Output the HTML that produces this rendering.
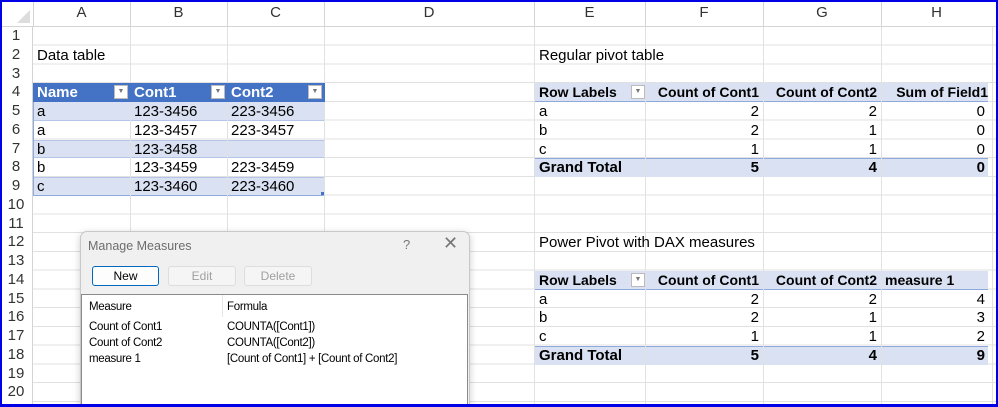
<!DOCTYPE html><html><head><style>
*{margin:0;padding:0;box-sizing:border-box}
body{width:998px;height:407px;overflow:hidden;background:#fff;font-family:"Liberation Sans",Arial,sans-serif;position:relative}
.g{position:absolute;left:0;top:27px;width:998px;height:380px;background:repeating-linear-gradient(to bottom,transparent 0,transparent 17.75px,#e1e1e1 17.75px,#e1e1e1 18.75px)}
.v{position:absolute;top:0;height:407px;width:1px;background:#e1e1e1}
.hdr{position:absolute;left:0;top:0;width:998px;height:27px;background:#fff;border-bottom:1px solid #d4d4d4}
.rh{position:absolute;left:0;top:27px;width:33px;height:380px;background:#fff;border-right:1px solid #d4d4d4}
.ch{position:absolute;top:4px;font-size:15px;color:#333;text-align:center}
.rn{position:absolute;left:0;width:32px;text-align:center;font-size:15px;color:#333;height:18.75px;line-height:18.75px}
.c{position:absolute;height:18.75px;line-height:19px;font-size:15px;color:#000;white-space:nowrap;padding-left:4px}
.r{text-align:right;padding-right:4px;padding-left:0}
.b{font-weight:bold}
.p{font-size:14px}
.band{position:absolute;background:#d9e1f2}
.dd{display:inline-block;width:14px;height:14px;border:1px solid #bbb;background:#fff;position:absolute;top:2px;font-size:7px;line-height:12px;text-align:center;color:#777}
</style></head><body>
<div class="g"></div>
<div class="band" style="left:33px;top:102px;width:292px;height:18.75px;border-bottom:1px solid #b4c6e7"></div>
<div class="band" style="left:33px;top:139.5px;width:292px;height:18.75px;border-top:1px solid #b4c6e7;border-bottom:1px solid #b4c6e7"></div>
<div class="band" style="left:33px;top:177px;width:292px;height:18.75px;border-top:1px solid #b4c6e7;border-bottom:1px solid #8ea9db"></div>
<div style="position:absolute;left:324px;top:102px;width:1px;height:94px;background:#8ea9db"></div>
<div style="position:absolute;left:33px;top:102px;width:1px;height:94px;background:#8ea9db"></div>
<div class="band" style="left:535px;top:83.25px;width:453px;height:18.75px;border-bottom:1px solid #8ea9db"></div>
<div class="band" style="left:535px;top:158.25px;width:453px;height:18.75px;border-top:1px solid #8ea9db"></div>
<div class="band" style="left:535px;top:270.75px;width:453px;height:18.75px;border-bottom:1px solid #8ea9db"></div>
<div class="band" style="left:535px;top:345.75px;width:453px;height:18.75px;border-top:1px solid #8ea9db"></div>
<div class="v" style="left:130px"></div><div class="v" style="left:227px"></div><div class="v" style="left:324px"></div><div class="v" style="left:534px"></div><div class="v" style="left:645px"></div><div class="v" style="left:763px"></div><div class="v" style="left:881px"></div><div class="v" style="left:992px"></div>
<div style="position:absolute;left:33px;top:83.25px;width:292px;height:18.75px;background:#4472c4"></div>
<div class="hdr"></div>
<div style="position:absolute;left:17px;top:10px;width:0;height:0;border-left:13px solid transparent;border-bottom:13px solid #ddd"></div>
<div class="v" style="left:130px;height:27px;background:#d4d4d4"></div><div class="v" style="left:227px;height:27px;background:#d4d4d4"></div><div class="v" style="left:324px;height:27px;background:#d4d4d4"></div><div class="v" style="left:534px;height:27px;background:#d4d4d4"></div><div class="v" style="left:645px;height:27px;background:#d4d4d4"></div><div class="v" style="left:763px;height:27px;background:#d4d4d4"></div><div class="v" style="left:881px;height:27px;background:#d4d4d4"></div><div class="v" style="left:33px;height:27px;background:#d4d4d4"></div>
<div class="ch" style="left:33px;width:97px">A</div><div class="ch" style="left:130px;width:97px">B</div><div class="ch" style="left:227px;width:97px">C</div><div class="ch" style="left:324px;width:210px">D</div><div class="ch" style="left:534px;width:111px">E</div><div class="ch" style="left:645px;width:118px">F</div><div class="ch" style="left:763px;width:118px">G</div><div class="ch" style="left:881px;width:111px">H</div>
<div class="rh">
<div class="rn" style="top:0">1</div><div class="rn" style="top:18.75px">2</div><div class="rn" style="top:37.5px">3</div><div class="rn" style="top:56.25px">4</div><div class="rn" style="top:75px">5</div><div class="rn" style="top:93.75px">6</div><div class="rn" style="top:112.5px">7</div><div class="rn" style="top:131.25px">8</div><div class="rn" style="top:150px">9</div><div class="rn" style="top:168.75px">10</div><div class="rn" style="top:187.5px">11</div><div class="rn" style="top:206.25px">12</div><div class="rn" style="top:225px">13</div><div class="rn" style="top:243.75px">14</div><div class="rn" style="top:262.5px">15</div><div class="rn" style="top:281.25px">16</div><div class="rn" style="top:300px">17</div><div class="rn" style="top:318.75px">18</div><div class="rn" style="top:337.5px">19</div><div class="rn" style="top:356.25px">20</div>
</div>
<div class="c" style="left:33px;top:45.75px">Data table</div>
<div class="c b" style="left:33px;top:83.25px;width:97px;color:#fff">Name<span class="dd" style="right:2px">▼</span></div>
<div class="c b" style="left:130px;top:83.25px;width:97px;color:#fff">Cont1<span class="dd" style="right:2px">▼</span></div>
<div class="c b" style="left:227px;top:83.25px;width:97px;color:#fff">Cont2<span class="dd" style="right:2px">▼</span></div>
<div class="c" style="left:33px;top:102px">a</div><div class="c" style="left:130px;top:102px">123-3456</div><div class="c" style="left:227px;top:102px">223-3456</div>
<div class="c" style="left:33px;top:120.75px">a</div><div class="c" style="left:130px;top:120.75px">123-3457</div><div class="c" style="left:227px;top:120.75px">223-3457</div>
<div class="c" style="left:33px;top:139.5px">b</div><div class="c" style="left:130px;top:139.5px">123-3458</div>
<div class="c" style="left:33px;top:158.25px">b</div><div class="c" style="left:130px;top:158.25px">123-3459</div><div class="c" style="left:227px;top:158.25px">223-3459</div>
<div class="c" style="left:33px;top:177px">c</div><div class="c" style="left:130px;top:177px">123-3460</div><div class="c" style="left:227px;top:177px">223-3460</div>
<div style="position:absolute;left:321px;top:192px;width:3px;height:3px;background:#4472c4"></div>

<div class="c" style="left:535px;top:45.75px">Regular pivot table</div>
<div class="c b p" style="left:535px;top:83.25px;width:110px">Row Labels<span class="dd" style="right:0">▼</span></div>
<div class="c b p r" style="left:645px;top:83.25px;width:118px">Count of Cont1</div>
<div class="c b p r" style="left:763px;top:83.25px;width:118px">Count of Cont2</div>
<div class="c b p r" style="left:881px;top:83.25px;width:111px">Sum of Field1</div>
<div class="c" style="left:535px;top:102px">a</div><div class="c r" style="left:645px;top:102px;width:118px">2</div><div class="c r" style="left:763px;top:102px;width:118px">2</div><div class="c r" style="left:881px;top:102px;width:108px">0</div>
<div class="c" style="left:535px;top:120.75px">b</div><div class="c r" style="left:645px;top:120.75px;width:118px">2</div><div class="c r" style="left:763px;top:120.75px;width:118px">1</div><div class="c r" style="left:881px;top:120.75px;width:108px">0</div>
<div class="c" style="left:535px;top:139.5px">c</div><div class="c r" style="left:645px;top:139.5px;width:118px">1</div><div class="c r" style="left:763px;top:139.5px;width:118px">1</div><div class="c r" style="left:881px;top:139.5px;width:108px">0</div>
<div class="c b" style="left:535px;top:158.25px">Grand Total</div><div class="c b r" style="left:645px;top:158.25px;width:118px">5</div><div class="c b r" style="left:763px;top:158.25px;width:118px">4</div><div class="c b r" style="left:881px;top:158.25px;width:108px">0</div>

<div class="c" style="left:535px;top:233.25px">Power Pivot with DAX measures</div>
<div class="c b p" style="left:535px;top:270.75px;width:110px">Row Labels<span class="dd" style="right:0">▼</span></div>
<div class="c b p r" style="left:645px;top:270.75px;width:118px">Count of Cont1</div>
<div class="c b p r" style="left:763px;top:270.75px;width:118px">Count of Cont2</div>
<div class="c b p" style="left:881px;top:270.75px;width:111px">measure 1</div>
<div class="c" style="left:535px;top:289.5px">a</div><div class="c r" style="left:645px;top:289.5px;width:118px">2</div><div class="c r" style="left:763px;top:289.5px;width:118px">2</div><div class="c r" style="left:881px;top:289.5px;width:108px">4</div>
<div class="c" style="left:535px;top:308.25px">b</div><div class="c r" style="left:645px;top:308.25px;width:118px">2</div><div class="c r" style="left:763px;top:308.25px;width:118px">1</div><div class="c r" style="left:881px;top:308.25px;width:108px">3</div>
<div class="c" style="left:535px;top:327px">c</div><div class="c r" style="left:645px;top:327px;width:118px">1</div><div class="c r" style="left:763px;top:327px;width:118px">1</div><div class="c r" style="left:881px;top:327px;width:108px">2</div>
<div class="c b" style="left:535px;top:345.75px">Grand Total</div><div class="c b r" style="left:645px;top:345.75px;width:118px">5</div><div class="c b r" style="left:763px;top:345.75px;width:118px">4</div><div class="c b r" style="left:881px;top:345.75px;width:108px">9</div>

<div style="position:absolute;left:80px;top:231px;width:390px;height:176px;background:#f0f0f0;border:1px solid #c8c8c8;border-bottom:none;border-radius:7px 7px 0 0;box-shadow:0 2px 8px rgba(0,0,0,.2);font-size:12px;overflow:hidden">
<div style="position:absolute;left:7px;top:7px;color:#6d6d6d;font-size:12.5px">Manage Measures</div>
<div style="position:absolute;left:322px;top:5px;color:#777;font-size:13px">?</div>
<div style="position:absolute;left:362px;top:1px;color:#777;font-size:18px">✕</div>
<div style="position:absolute;left:11px;top:34px;width:67px;height:20px;border:1px solid #0067c0;border-radius:3px;background:#fdfdfd;text-align:center;line-height:18px;color:#000">New</div>
<div style="position:absolute;left:87px;top:34px;width:68px;height:20px;border:1px solid #ddd;border-radius:3px;background:#f5f5f5;text-align:center;line-height:18px;color:#a0a0a0">Edit</div>
<div style="position:absolute;left:163px;top:34px;width:68px;height:20px;border:1px solid #ddd;border-radius:3px;background:#f5f5f5;text-align:center;line-height:18px;color:#a0a0a0">Delete</div>
<div style="position:absolute;left:0;top:62px;width:387px;height:120px;background:#fff;border:1px solid #8a8a8a;font-size:11.5px;letter-spacing:-.3px">
<div style="position:absolute;left:140px;top:0;width:1px;height:22px;background:#e5e5e5"></div>
<div style="position:absolute;left:7px;top:6px">Measure</div><div style="position:absolute;left:145px;top:6px">Formula</div>
<div style="position:absolute;left:7px;top:26px">Count of Cont1</div><div style="position:absolute;left:145px;top:26px">COUNTA([Cont1])</div>
<div style="position:absolute;left:7px;top:42px">Count of Cont2</div><div style="position:absolute;left:145px;top:42px">COUNTA([Cont2])</div>
<div style="position:absolute;left:7px;top:58px">measure 1</div><div style="position:absolute;left:145px;top:58px">[Count of Cont1] + [Count of Cont2]</div>
</div></div>
<div style="position:absolute;left:0;top:0;width:998px;height:407px;border:2px solid #0000e6;border-bottom-width:3px"></div>
</body></html>
